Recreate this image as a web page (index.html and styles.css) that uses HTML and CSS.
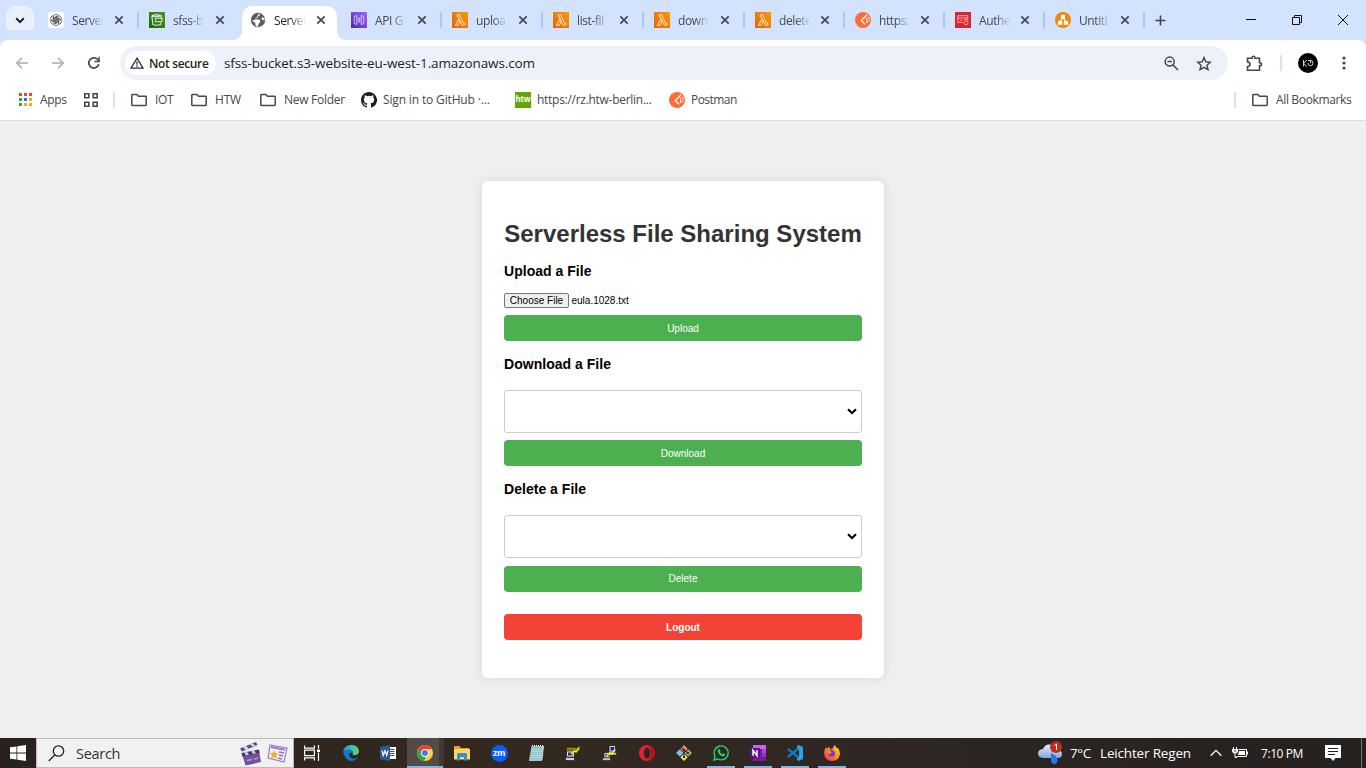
FILE: index.html
```html
<!DOCTYPE html>
<html lang="en">
<head>
<meta charset="utf-8">
<title>Serverless File Sharing System</title>
<link rel="stylesheet" href="styles.css">
</head>
<body>
<svg class="defs" width="0" height="0">
  <defs>
    <linearGradient id="orange" x1="0" y1="1" x2="1" y2="0"><stop offset="0" stop-color="#d86613"/><stop offset="1" stop-color="#ff9900"/></linearGradient>
    <linearGradient id="purple" x1="0" y1="1" x2="1" y2="0"><stop offset="0" stop-color="#4d27a8"/><stop offset="1" stop-color="#a166ff"/></linearGradient>
    <linearGradient id="green" x1="0" y1="1" x2="1" y2="0"><stop offset="0" stop-color="#1b660f"/><stop offset="1" stop-color="#4d9a27"/></linearGradient>
    <linearGradient id="edge" x1="0" y1="0" x2="1" y2="0"><stop offset="0" stop-color="#1b9de2"/><stop offset="1" stop-color="#62d96b"/></linearGradient>
    <linearGradient id="cloud" x1="0" y1="0" x2="0" y2="1"><stop offset="0" stop-color="#e8f0fc"/><stop offset="1" stop-color="#7da6e4"/></linearGradient>
    <linearGradient id="fox" x1="1" y1="0" x2="0" y2="1"><stop offset="0" stop-color="#ffe226"/><stop offset=".5" stop-color="#ff8a1e"/><stop offset="1" stop-color="#f5156c"/></linearGradient>
    <symbol id="x" viewBox="0 0 10 10"><path d="M1.3 1.3 8.7 8.7M8.7 1.3 1.3 8.7" stroke="#45484c" stroke-width="1.700" fill="none"/></symbol>
    <symbol id="folder" viewBox="0 0 16 16"><path d="M.8 3.200q0-.7.7-.7h4.300l1.700 1.800h7q.7 0 .7.7v7.800q0 .7-.7.7h-13q-.7 0-.7-.7z" fill="none" stroke="#474747" stroke-width="1.500"/></symbol>
    <symbol id="lambda" viewBox="0 0 16 16"><path fill="url(#orange)" d="M0 0h16v16H0z"/><path d="M5.200 2.700h2.500l3.700 8.500 1.300-.4.600 1.800-3 1L6.900 6.500 6.300 4.700H5.200zM6.500 7.400 8 10.300 6.300 13.400H3.200z" fill="#f08b1b" stroke="#ffeeda" stroke-width=".8"/></symbol>
    <symbol id="postman" viewBox="0 0 16 16"><circle cx="8" cy="8" r="8" fill="#ff6c37"/><path d="M12.200 2.800 6.200 8.400 10 12.300" stroke="#fff" stroke-width="1.300" fill="none"/><path d="M11.500 6.500q2.500-2.200 2.900-.3T11.700 11z" fill="none" stroke="#fff" stroke-width=".9"/></symbol>
  </defs>
</svg>

<header class="tabstrip">
  <div class="tab-search"><span><svg width="10" height="7" viewBox="0 0 10 7"><path d="m1.200 1.300 3.800 3.800 3.800-3.800" fill="none" stroke="#1f1f1f" stroke-width="2"/></svg></span></div>
  <div class="tab sep"><svg class="fav" viewBox="0 0 16 16"><rect width="16" height="16" rx="3" fill="#fff"/><g fill="none" stroke="#333" stroke-width=".65"><path id="petal" d="M5.600 9.800V4.700Q5.800 2.200 8 2.200q1.500 0 2.300 1.200L7 5.300v3.800"/><path d="M5.600 9.800V4.700Q5.800 2.200 8 2.200q1.500 0 2.300 1.200L7 5.300v3.800" transform="rotate(60 8 8)"/><path d="M5.600 9.800V4.700Q5.800 2.200 8 2.200q1.500 0 2.300 1.200L7 5.300v3.800" transform="rotate(120 8 8)"/><path d="M5.600 9.800V4.700Q5.800 2.200 8 2.200q1.500 0 2.300 1.200L7 5.300v3.800" transform="rotate(180 8 8)"/><path d="M5.600 9.800V4.700Q5.800 2.200 8 2.200q1.500 0 2.300 1.200L7 5.300v3.800" transform="rotate(240 8 8)"/><path d="M5.600 9.800V4.700Q5.800 2.200 8 2.200q1.500 0 2.300 1.200L7 5.300v3.800" transform="rotate(300 8 8)"/></g></svg><span class="tab-title">Server</span><svg class="close"><use href="#x"/></svg></div>
  <div class="tab"><svg class="fav" viewBox="0 0 16 16"><path fill="url(#green)" d="M0 0h16v16H0z"/><path d="M2.800 3.700q5-1.700 9.200 0v2M2.800 3.700l1.200 8.800q3.500 1.500 7.500 0l.3-1.800M2.800 3.700q4.500 2 9.200 0M5.500 6.200h7.500v3.500M6.500 7.500v2.300h6" fill="none" stroke="#e2f0dc" stroke-width="1.100"/></svg><span class="tab-title">sfss-b</span><svg class="close"><use href="#x"/></svg></div>
  <div class="tab active"><svg class="fav" viewBox="0 0 16 16"><circle cx="8" cy="8" r="7.200" fill="#5a5d61"/><path d="M9.200 1.300 10 3.200 7.800 4.500 7.600 6 5.500 6.300 6.400 7.600h3l1 2.300-1.700 1.500-.8 3.500C5 14.200 5.300 12 5.300 10.900L1.300 8C2 8.300 4.500 8.400 4.700 8.300M11.500 5.300 14.300 6 14.700 8.300 12 8z" fill="#fff"/></svg><span class="tab-title">Server</span><svg class="close"><use href="#x"/></svg></div>
  <div class="tab sep"><svg class="fav" viewBox="0 0 16 16"><path fill="url(#purple)" d="M0 0h16v16H0z"/><path d="M5.800 3.500 3.300 4.500v7l2.500 1zM10.200 3.500l2.500 1v7l-2.500 1zM7.300 5.500v5M8.700 5.500v5" fill="none" stroke="#e6d8ff" stroke-width=".8"/></svg><span class="tab-title">API G</span><svg class="close"><use href="#x"/></svg></div>
  <div class="tab sep"><svg class="fav"><use href="#lambda"/></svg><span class="tab-title">uploa</span><svg class="close"><use href="#x"/></svg></div>
  <div class="tab sep"><svg class="fav"><use href="#lambda"/></svg><span class="tab-title">list-fil</span><svg class="close"><use href="#x"/></svg></div>
  <div class="tab sep"><svg class="fav"><use href="#lambda"/></svg><span class="tab-title">down</span><svg class="close"><use href="#x"/></svg></div>
  <div class="tab sep narrow"><svg class="fav"><use href="#lambda"/></svg><span class="tab-title">delete</span><svg class="close"><use href="#x"/></svg></div>
  <div class="tab sep narrow"><svg class="fav"><use href="#postman"/></svg><span class="tab-title">https:</span><svg class="close"><use href="#x"/></svg></div>
  <div class="tab sep narrow"><svg class="fav" viewBox="0 0 16 16"><path fill="#d9252f" d="M0 0h16v16H0z"/><path d="M8 10.500H2.800V3.700h10v4M3 6h9.800M4.500 8.300h3M9 7.800l2-1 1.500 1.500" fill="none" stroke="#ffb5ba" stroke-width=".9"/><circle cx="11" cy="10.700" r="2" fill="none" stroke="#ffb5ba" stroke-width=".9"/></svg><span class="tab-title">Authe</span><svg class="close"><use href="#x"/></svg></div>
  <div class="tab sep narrow"><svg class="fav" viewBox="0 0 16 16"><circle cx="8" cy="8" r="8" fill="#f08705"/><path d="m8 5-3.200 5.500M8 5l3.200 5.500" stroke="#fff" stroke-width="1.300"/><path d="M5.900 2.800h4.200v4H5.900zM2.900 9h4.300v3.800H2.900zM8.800 9h4.300v3.800H8.800z" fill="#fff"/></svg><span class="tab-title">Untitl</span><svg class="close"><use href="#x"/></svg></div>
  <svg class="newtab" width="11" height="11" viewBox="0 0 11 11"><path d="M5.500.5v10M.5 5.500h10" stroke="#414549" stroke-width="1.600"/></svg>
  <div class="winbtns">
    <svg width="12" height="12"><path d="M1 5.500h10" stroke="#111"/></svg>
    <svg width="12" height="12" fill="none" stroke="#111"><path d="M1.500 3.500h7v7h-7zM3.500 3.500v-2h7v7h-2"/></svg>
    <svg width="12" height="12"><path d="m1 1 10 10M11 1 1 11" stroke="#111"/></svg>
  </div>
</header>

<nav class="toolbar">
  <div class="navbtns">
    <svg width="14" height="12" viewBox="0 0 14 12" fill="none" stroke="#a9abae" stroke-width="1.500"><path d="M13 6H2M7 .8 1.800 6 7 11.200"/></svg>
    <svg width="14" height="12" viewBox="0 0 14 12" fill="none" stroke="#a9abae" stroke-width="1.500"><path d="M1 6h11M7 .8 12.200 6 7 11.200"/></svg>
    <svg width="14" height="14" viewBox="0 0 14 14"><path d="M11.800 8.300A5.100 5.100 0 1 1 10.700 3.500L12 5" fill="none" stroke="#45484c" stroke-width="1.700"/><path d="M12.800.8v5.400H7.500V4.800h3.900V.8z" fill="#45484c"/></svg>
  </div>
  <div class="omnibox">
    <div class="chip"><svg width="14" height="12" viewBox="0 0 14 12"><path d="M7 1.200 13 11.200H1z" fill="none" stroke="#303236" stroke-width="1.300"/><path d="M7 4.500v3.300M7 8.600v1.300" stroke="#303236" stroke-width="1.300"/></svg><span>Not secure</span></div>
    <span class="url">sfss-bucket.s3-website-eu-west-1.amazonaws.com</span>
    <svg class="lens" width="15" height="15" viewBox="0 0 15 15" fill="none" stroke="#474747" stroke-width="1.500"><circle cx="5.700" cy="5.600" r="4.500"/><path d="m9 9 5 5M3.500 5.600h4.400"/></svg>
    <svg class="star" width="16" height="15" viewBox="0 0 16 15"><path d="m8 1.500 1.800 4.300 4.700.4-3.600 3 1.100 4.500-4-2.400-4 2.400 1.100-4.500-3.600-3 4.700-.4z" fill="none" stroke="#474747" stroke-width="1.400"/></svg>
  </div>
  <svg class="puzzle" width="17" height="17" viewBox="0 0 17 17"><path d="M1.500 3.200H6Q6 1.200 7.500 1.200T9 3.200h4.500v4.500q2 0 2 1.500t-2 1.500v4.600h-12V11.700Q4 11.200 4 9.300T1.500 6.900z" fill="none" stroke="#474747" stroke-width="1.600"/></svg>
  <i class="bar"></i>
  <svg class="avatar" width="20" height="20" viewBox="0 0 20 20"><circle cx="10" cy="10" r="10"/><path d="M5.500 7v6.500M9 7l-3.500 3.300L9 13.500M10 7.500h2.500q2.500 0 2.500 2.600t-2.500 2.700Q10 12.500 10 10M12.500 7.500V10" stroke="#e5e5e5" fill="none" stroke-width=".9"/></svg>
  <svg class="dots" width="4" height="14" fill="#474747"><circle cx="2" cy="2" r="1.600"/><circle cx="2" cy="7" r="1.600"/><circle cx="2" cy="12" r="1.600"/></svg>
</nav>

<nav class="bookmarks">
  <div class="bm w-apps"><svg class="ic" viewBox="0 0 16 16"><path fill="#ea4335" d="M0 1h3v3H0zM5 1h3v3H5zM10 1h3v3h-3z"/><path fill="#34a853" d="M0 6h3v3H0zM0 11h3v3H0z"/><path fill="#1a73e8" d="M5 6h3v3H5z"/><path fill="#fbaa05" d="M10 6h3v3h-3zM5 11h3v3H5zM10 11h3v3h-3z"/></svg><span>Apps</span></div>
  <div class="bm w-grid"><svg class="ic" viewBox="0 0 16 16" fill="none" stroke="#474747" stroke-width="1.600"><path d="M1.800 1.800h4v4h-4zM10.200 1.800h4v4h-4zM1.800 10.200h4v4h-4zM10.200 10.200h4v4h-4z"/></svg></div>
  <div class="bm w-sep"><i class="bar"></i></div>
  <div class="bm f w-iot"><svg class="ic"><use href="#folder"/></svg><span>IOT</span></div>
  <div class="bm f w-htw"><svg class="ic"><use href="#folder"/></svg><span>HTW</span></div>
  <div class="bm f w-new"><svg class="ic"><use href="#folder"/></svg><span>New Folder</span></div>
  <div class="bm w-site github"><svg class="ic" viewBox="0 0 16 16"><path fill="#1b1f23" d="M8 0C3.580 0 0 3.580 0 8c0 3.540 2.290 6.530 5.470 7.590.4.070.55-.17.55-.38 0-.19-.01-.82-.01-1.490-2.010.37-2.530-.49-2.690-.94-.09-.23-.48-.94-.82-1.130-.28-.15-.68-.52-.01-.53.63-.01 1.080.58 1.230.82.72 1.210 1.870.87 2.330.66.07-.52.28-.87.51-1.070-1.780-.2-3.640-.89-3.640-3.950 0-.87.31-1.590.82-2.150-.08-.2-.36-1.020.08-2.120 0 0 .67-.21 2.200.82a7.600 7.600 0 0 1 4 0c1.530-1.040 2.200-.82 2.200-.82.44 1.100.16 1.920.08 2.120.51.56.82 1.270.82 2.150 0 3.070-1.870 3.750-3.650 3.950.29.25.54.73.54 1.480 0 1.070-.01 1.930-.01 2.200 0 .21.15.46.55.38A8 8 0 0 0 8 0z"/></svg><span>Sign in to GitHub ·...</span></div>
  <div class="bm w-site rz"><span class="htw">htw</span><span>https://rz.htw-berlin...</span></div>
  <div class="bm postman"><svg class="ic"><use href="#postman"/></svg><span>Postman</span></div>
  <div class="bm all"><i class="bar"></i></div>
  <div class="bm f w-all"><svg class="ic"><use href="#folder"/></svg><span>All Bookmarks</span></div>
</nav>

<main class="page">
  <section class="card">
    <h1>Serverless File Sharing System</h1>
    <h3>Upload a File</h3>
    <div class="file"><button>Choose File</button><span>eula.1028.txt</span></div>
    <button class="btn">Upload</button>
    <h3>Download a File</h3>
    <div class="select"><svg width="10" height="7" viewBox="0 0 10 7"><path d="m1 1.200 4 3.800 4-3.800" fill="none" stroke="#000" stroke-width="2.100"/></svg></div>
    <button class="btn">Download</button>
    <h3>Delete a File</h3>
    <div class="select"><svg width="10" height="7" viewBox="0 0 10 7"><path d="m1 1.200 4 3.800 4-3.800" fill="none" stroke="#000" stroke-width="2.100"/></svg></div>
    <button class="btn last">Delete</button>
    <button class="btn logout">Logout</button>
  </section>
</main>

<footer class="taskbar">
  <div class="start"><svg width="16" height="16" viewBox="0 0 16 16" fill="#fff"><path d="M0 2.300 6.500 1.400v6.200H0zM7.300 1.200 16 0v7.600H7.300zM0 8.400h6.500v6.200L0 13.700zM7.300 8.400H16V16l-8.700-1.200z"/></svg></div>
  <div class="search"><svg width="17" height="17" viewBox="0 0 17 17" fill="none" stroke="#222" stroke-width="1.300"><circle cx="10.500" cy="6" r="5.200"/><path d="M6.800 9.800.8 16"/></svg><span>Search</span>
    <svg class="clap" width="23" height="25" viewBox="0 0 23 25"><path d="m3 13 17-3 2 11-15.500 3.500z" fill="#75509c"/><path d="m1 7.500 16-6.500 1.500 3L3 10.500z" fill="#575083"/><path d="m4 6.300 3 2.700 3-1-3-3zM11 3.500l3 2.200 2.500-1-3-2.200z" fill="#dbdcf5"/><path d="m2.500 12 17.500-3.500.7 3.500L3.300 15.500z" fill="#463a6b"/><path d="m5 11.500 2 3 3-.7-2-3zM12 10l2 3 3-.7-2-3z" fill="#cbc5e8"/><path d="m8 19.500 5-1M15 18l4-.8" stroke="#b99ad8" stroke-width="1.500"/></svg>
    <svg class="card-ic" width="21" height="19" viewBox="0 0 21 19"><path d="m3 1 17 3-3 14L1 14z" fill="#f1edfa" stroke="#9580bf" stroke-width="1.200"/><path d="m4 3 14 2.700" stroke="#9c72c7" stroke-width="2"/><path d="m12 8 5 1M12 11l4 1M11 14l4 1" stroke="#8876ae" stroke-width="1.300"/><path d="m7.500 6.500 1 2.700 3 .3-2.200 2.200.4 3-2.700-1.500-3 1 .8-2.900-2-2.200 3-.1z" fill="#f8ae18"/></svg>
  </div>
  <div class="task view"><svg width="16" height="16" viewBox="0 0 16 16" stroke="#fff" fill="none" stroke-width="1.200"><path d="M.6.500v2.700h9.800V.5M.6 15.500v-2.700h9.800v2.700M.6 5.200h9.800v5.500H.6zM14.500 0v3.500M14.500 8v8"/><path d="M13 4.500h3v2.700h-3z" fill="#fff" stroke="none"/></svg></div>
  <div class="task"><svg viewBox="0 0 16 16"><path d="M.2 7Q1 .2 8 .1T15.900 6Q16 10 12 10.200 8.500 10.300 9.800 8.300 9.800 5.500 6.500 5T.2 7z" fill="url(#edge)"/><path d="M.1 7.800Q1 4.500 5 4.500t4.800 3.300Q6 7 6.100 10q.4 4 6 3.600L14.800 12Q12.500 16 8 16T.1 7.800z" fill="#1278ce"/></svg></div>
  <div class="task"><svg viewBox="0 0 16 16"><path d="M8 2h8v12H8z" fill="#fff"/><path d="M10 4.500h4.500M10 6.500h4.500M10 8.500h4.500M10 10.500h4.500" stroke="#2b579a"/><path d="m0 1.700 10-1.700v16L0 14.300z" fill="#2b579a"/><path d="m2 5.500 1.200 5L5 5.700l1.700 4.800 1.300-5" fill="none" stroke="#fff" stroke-width="1.200"/></svg></div>
  <div class="task current"><svg viewBox="0 0 16 16"><circle cx="8" cy="8" r="8" fill="#ffcd40"/><path d="M1.100 4A8 8 0 0 1 15 4H8L4.500 10z" fill="#e94235"/><path d="M1.100 4 4.800 10.200 8.700 12 7.200 16A8 8 0 0 1 1.100 4z" fill="#34a350"/><circle cx="8" cy="8" r="3.900" fill="#fff"/><circle cx="8" cy="8" r="3" fill="#3f7ee8"/></svg></div>
  <div class="task"><svg viewBox="0 0 16 16"><path d="M0 1h5.500L7 3h8v3H0z" fill="#e6a216"/><path d="M0 4h16v10.500H0z" fill="#ffd767"/><path d="M3 15.500V9.500Q3 8 4.500 8h7Q13 8 13 9.500v6h-3V12H6v3.500z" fill="#2e91d5"/></svg></div>
  <div class="task"><span class="zm">zm</span></div>
  <div class="task"><svg viewBox="0 0 16 16"><path d="M3.500 1H15.500l-1.700 14H1z" fill="#8fc3cc"/><path d="M3.500 4.500h10.500M3.200 6.500h10.500M2.800 8.500h10.500M2.500 10.500h10.500M2 12.500h11" stroke="#c5e5e9" stroke-width=".7"/><path d="M1 15.300h12.800L15.500 1" fill="none" stroke="#e7e5d7"/><path d="M4 .5h11.500" stroke="#eef5f4" stroke-width="1.500" stroke-dasharray="1 1"/></svg></div>
  <div class="task"><svg viewBox="0 0 16 16"><path d="M1 2h8l3 .5L13.500.5l2 1v3l-3 1.500-3 .5L8 7H1z" fill="#8a8300" stroke="#111" stroke-width=".8"/><path d="M1.500 6h8v6h-8z" fill="#ddd" stroke="#111" stroke-width=".7"/><path d="M3 7.500h4.500v3H3z" fill="#1a24bb"/><path d="M.5 12.500h9v3h-9z" fill="#d0d0d0" stroke="#111" stroke-width=".6"/><path d="m6 9 3.500-3 1.500 1 3-3.500" fill="none" stroke="#ffed00" stroke-width="1.500"/></svg></div>
  <div class="task"><svg viewBox="0 0 16 16"><path d="M7 .5h6.500V7H7zM2 7.500h6V13H2z" fill="#d3d3d3" stroke="#111" stroke-width=".7"/><path d="M8.500 2h3.700v3.500H8.500zM3.500 9H7v2.500H3.500z" fill="#151fc0"/><path d="M6.500 7.500h8V10h-8zM.5 13h8v2.500h-8z" fill="#c9c9c9" stroke="#111" stroke-width=".5"/><path d="m4.500 11.500 3.700-4 1.500 1.700 3.300-4.700" stroke="#ffec20" stroke-width="1.700" fill="none"/></svg></div>
  <div class="task"><svg viewBox="0 0 16 16"><circle cx="8" cy="8" r="8" fill="#e5222e"/><path d="M8 0a8 8 0 0 1 0 16 8 8 0 0 0 4-8 8 8 0 0 0-4-8z" fill="#ad1422"/><ellipse cx="8" cy="8" rx="3.300" ry="5.500" fill="#2c2522"/></svg></div>
  <div class="task"><svg viewBox="0 0 16 16"><path d="m8 0 3.700 3.700L8 7.400 4.300 3.700z" fill="#ee8276"/><path d="m3.800 4.200 3.700 3.700-3.700 3.700L0 8z" fill="#84b9ed"/><path d="m12.200 4.200L16 8l-3.800 3.600-3.700-3.700z" fill="#90bf62"/><path d="m8 8.500 3.700 3.700L8 16l-3.700-3.800z" fill="#f5da74"/><path d="m5 2 3 3v7M8 5l4 3" stroke="#342b25" stroke-width="1.100" fill="none"/><path d="M7 4h2v2H7zM7 11h2v2H7zM11 7h2v2h-2z" fill="#342b25"/></svg></div>
  <div class="task open"><svg viewBox="0 0 16 16"><path d="m1 15 1-3.800A7 7 0 1 1 4.800 14z" fill="none" stroke="#25d366" stroke-width="1.400"/><path d="M5.500 4.200 6.600 4l.9 2-.7 1q.8 1.500 2.400 2.200l.9-1 2 1q-.1 2-2 2.200-1.600 0-4-2.200-2.500-3-.6-5z" fill="#25d366"/></svg></div>
  <div class="task open"><svg viewBox="0 0 16 16"><path d="M3 0h13v16H3z" fill="#ca64ea"/><path d="M3 4h9v12H3z" fill="#7719aa"/><path d="M12 4h4v4h-4z" fill="#ae4bd5"/><path d="M12 8h4v4h-4z" fill="#9332bf"/><path d="M12 12h4v4h-4z" fill="#7719aa"/><path d="M0 3h10v10H0z" fill="#5c1389"/><path d="M3 10.700V5.300l4 5.400V5.300" stroke="#fff" stroke-width="1.500" fill="none"/></svg></div>
  <div class="task open"><svg viewBox="0 0 16 16"><path d="m1 4 11 9M1 12l11-9" stroke="#0d7bc4" stroke-width="2.300"/><path d="m11.500 0 4.500 2v12l-4.500 2L9.500 14l2.500-2V4L9.500 2z" fill="#29a5ee"/></svg></div>
  <div class="task open"><svg viewBox="0 0 16 16"><path d="M1 4 2.500 2l.7 2L5 1.500 6 4l3-.5Q9 1 11 0q.3 2 2 3.200l.5-.7Q16 5 16 8.700 15 16 8 16T0 8.500Q0 6 1 4z" fill="url(#fox)"/><path d="M4.500 6.500Q5.500 4 8 4.700l2 1.300q2 2 1 4t-3.500 1.800T4 9l2.700-.4L8 7.500z" fill="#793bc5"/><path d="m3 6 3-.2L7.500 7 6 8.500z" fill="#ff9c20"/></svg></div>
  <div class="tray">
    <svg class="cloud" width="26" height="24" viewBox="0 0 26 24"><path d="M5 17Q0 16.500 0 12.500T5 8Q7 3 12 3.500t6 5q6 0 6 4.500t-5 4z" fill="url(#cloud)"/><path d="M13 12q7 3 6.500 8-1 3.500-4 2.800T13 19z" fill="#2678e5"/><circle cx="18" cy="6" r="6" fill="#c42b1c"/><path d="m16.500 4.500 2-1.500v6" stroke="#fff" fill="none"/></svg>
    <span class="temp">7°C</span><span class="rain">Leichter Regen</span>
    <svg class="chev" width="12" height="8" viewBox="0 0 12 8"><path d="m.7 6.700 5.300-5.300 5.300 5.300" stroke="#fff" stroke-width="1.300" fill="none"/></svg>
    <svg class="batt" width="16" height="12" viewBox="0 0 16 12" fill="none" stroke="#fff"><path d="M6.500 2.500h8v7h-10M15.500 4.500v3M1.500 0v2M4.500 0v2M3 7v3.500h2"/><path d="M0 2h6v2.500L4.500 6.500h-3L0 4.500zM7 4h6v4H6z" fill="#fff" stroke="none"/><path d="M2 4h2" stroke="#27211f"/></svg>
    <span class="time">7:10 PM</span>
    <svg class="note" width="16" height="16" viewBox="0 0 16 16"><path d="M0 0h16v13h-5.500L8 16l-2.500-3H0z" fill="#fff"/><path d="M3 3.500h10M3 6.500h10M3 9.500h7" stroke="#27211f"/></svg>
  </div>
</footer>
</body>
</html>
```
FILE: styles.css
```css
* { box-sizing: border-box; }
body { margin: 0; width: 1366px; height: 768px; overflow: hidden; display: flex; flex-direction: column; font-family: "Open Sans", sans-serif; background: #efefef; }
svg { flex: none; display: block; }
.defs { position: absolute; }

.tabstrip { height: 40px; flex: none; background: #d3e3fd; display: flex; align-items: center; }
.tab-search { width: 40px; padding-left: 6px; flex: none; }
.tab-search span { width: 28px; height: 28px; border-radius: 10px; background: #e9f1fe; display: flex; align-items: center; justify-content: center; }
.tab { width: 101px; height: 40px; flex: none; padding-left: 8px; display: flex; align-items: center; position: relative; }
.tab.narrow { width: 100px; }
.tab.sep::after { content: ""; position: absolute; right: 2px; top: 12px; width: 2px; height: 16px; background: #a8c7fa; }
.fav { width: 16px; height: 16px; }
.tab-title { width: 33px; margin: 1px 0 0 8px; white-space: nowrap; font-size: 12px; letter-spacing: -.4px; line-height: 18px; color: #45484c; -webkit-mask-image: linear-gradient(90deg, #000 50%, transparent 96%); mask-image: linear-gradient(90deg, #000 50%, transparent 96%); }
.close { width: 10px; height: 10px; margin-left: 9px; }
.narrow .close { margin-left: 8px; }
.tab.active { z-index: 1; }
.tab.active::before { content: ""; position: absolute; z-index: -1; left: 0; top: 6px; width: 95px; height: 34px; background: #fff; border-radius: 10px 10px 0 0; }
.tab.active::after { content: ""; position: absolute; z-index: -1; left: -10px; bottom: 0; width: 115px; height: 10px; background: radial-gradient(circle at 0 0, transparent 10px, #fff 10.500px) left / 10px 10px no-repeat, radial-gradient(circle at 100% 0, transparent 10px, #fff 10.500px) right / 10px 10px no-repeat; }
.tab.active .tab-title { color: #1f1f1f; }
.newtab { margin-left: 8px; }
.winbtns { margin-left: auto; padding-right: 17px; display: flex; gap: 34px; }

.toolbar { height: 46px; flex: none; background: #fff; display: flex; align-items: center; box-shadow: 0 -10px 0 #d3e3fd; border-radius: 8px 8px 0 0; }
.navbtns { width: 120px; flex: none; padding-left: 15px; display: flex; align-items: center; gap: 22px; }
.omnibox { width: 1108px; height: 34px; border-radius: 17px; background: #ecf1fa; display: flex; align-items: center; padding-left: 5px; }
.chip { width: 91px; height: 24px; border-radius: 12px; background: #fff; display: flex; align-items: center; padding-left: 5px; gap: 5px; font-size: 12px; font-weight: 600; letter-spacing: -.35px; color: #1f1f1f; white-space: nowrap; }
.url { margin-left: 8px; font-size: 13.500px; letter-spacing: -.11px; color: #1f1f1f; white-space: nowrap; }
.lens { margin-left: auto; }
.star { margin: 0 16px 0 17px; }
.puzzle { margin-left: 18px; }
.bar { display: block; width: 2px; height: 16px; background: #d3e3fd; flex: none; }
.toolbar .bar { margin-left: 17px; }
.avatar { margin-left: 16px; }
.dots { margin-left: 24px; }

.bookmarks { height: 35px; flex: none; background: #fff; border-bottom: 1px solid #dcdfe3; display: flex; padding: 0 0 6px 19px; }
.bm { display: flex; align-items: center; gap: 6px; flex: none; white-space: nowrap; font-size: 12px; letter-spacing: -.35px; color: #474747; }
.bm.f { gap: 8px; }
.bm span { line-height: 16px; }
.bm.github { letter-spacing: -.15px; }
.bm.rz { letter-spacing: -.28px; }
.bm.postman { letter-spacing: -.55px; }
.ic { width: 16px; height: 16px; }
.w-apps { width: 64px; gap: 5px; }
.w-grid { width: 30px; }
.w-sep { width: 18px; }
.w-iot { width: 60px; letter-spacing: -.4px; }
.w-htw { width: 69px; letter-spacing: -.2px; }
.w-new { width: 101px; letter-spacing: -.28px; }
.w-site { width: 154px; }
.w-all { width: 114px; }
.all { margin-left: auto; width: 18px; }
.bm .htw { width: 16px; height: 16px; background: #60a800; color: #fff; font-size: 8px; font-weight: 700; line-height: 14px; letter-spacing: -.2px; text-align: center; }

.page { height: 617px; flex: none; display: flex; justify-content: center; align-items: flex-start; padding-top: 60px; background: #efefef; font-family: "Liberation Sans", Arial, sans-serif; }
.card { width: 402px; height: 497px; padding: 38px 22px 0; border-radius: 6px; background: #fff; box-shadow: 0 0 11px rgba(0,0,0,.1); display: flex; flex-direction: column; }
h1 { margin: 0; height: 30px; line-height: 30px; font-size: 24px; color: #333; text-align: center; white-space: nowrap; }
h3 { margin: 14px 0; height: 16px; line-height: 16px; font-size: 14px; letter-spacing: .03px; color: #000; }
.file { display: flex; align-items: center; height: 15px; gap: 2.500px; font-size: 10px; color: #000; }
.file button { width: 65px; height: 15px; padding: 0; border: 1px solid #767676; border-radius: 2px; background: #efefef; font: 10px "Liberation Sans", Arial, sans-serif; line-height: 13px; color: #000; }
.btn { height: 26px; flex: none; margin: 7px 0 1px; padding: 0; border: 0; border-radius: 4px; background: #4caf50; color: #fff; font: 10px "Liberation Sans", Arial, sans-serif; }
.select { height: 43px; flex: none; margin-top: 4px; padding-right: 4px; border: 1px solid #ccc; border-radius: 3px; display: flex; align-items: center; justify-content: flex-end; }
.btn.last { margin-top: 8px; padding-bottom: 2px; }
.btn.logout { margin-top: 21px; background: #f44336; font-weight: 700; }

.taskbar { height: 30px; flex: none; display: flex; background: linear-gradient(90deg, #28211f, #33291f 35%, #2e2724 65%, #25211f); color: #fff; }
.start { width: 36px; display: flex; align-items: center; justify-content: center; }
.search { width: 258px; background: #f1f1f1; border: 1px solid #bbb; display: flex; align-items: center; padding-left: 11px; }
.search span { margin-left: 11px; font-size: 14.500px; letter-spacing: -.3px; color: #333; }
.clap { margin-left: auto; }
.card-ic { margin: 0 5px 0 5px; }
.task { width: 37px; display: flex; align-items: center; justify-content: center; position: relative; }
.task svg { width: 16px; height: 16px; }
.task.view { width: 38.500px; padding-right: 2px; }
.task.current { background: linear-gradient(90deg, #524b47 32px, #3f3733 32px); }
.task.open::after, .task.current::after { content: ""; position: absolute; left: 4px; bottom: 0; width: 28px; height: 2px; background: #76b9ed; }
.task.current::after { left: 0; width: 36px; }
.zm { width: 17px; height: 17px; border-radius: 50%; background: #0b5cff; font-size: 8.500px; font-weight: 700; line-height: 15px; text-align: center; letter-spacing: -.3px; }
.tray { margin-left: auto; width: 328px; display: flex; align-items: center; white-space: nowrap; }
.temp { margin-left: 6px; width: 30px; font-size: 13.500px; letter-spacing: -.4px; }
.rain { width: 110px; font-size: 13.500px; letter-spacing: -.17px; }
.chev { margin-right: 10px; }
.time { margin-left: 13px; width: 64px; font-size: 12px; letter-spacing: -.42px; }
.note { margin-right: 20px; }
.tray::after { content: ""; width: 1px; height: 30px; background: #77716d; }
```
